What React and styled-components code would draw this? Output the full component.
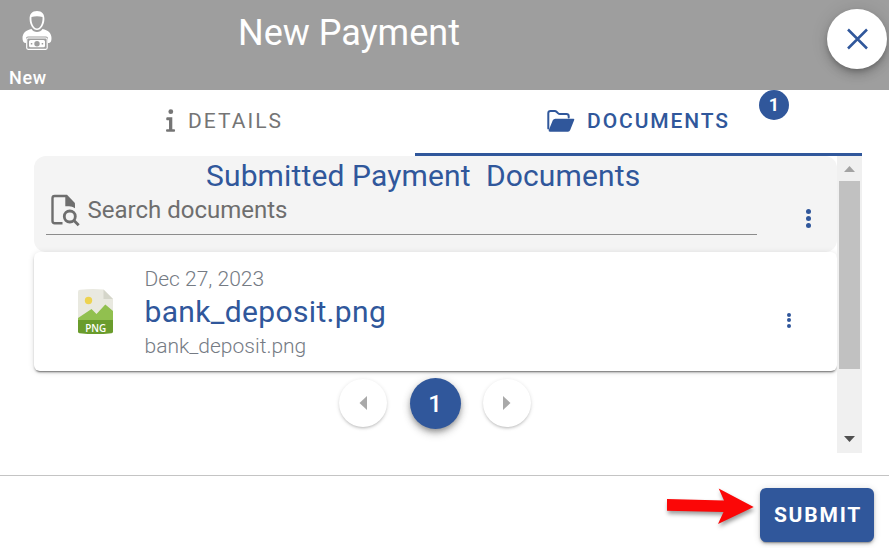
import React from "react";
import styled, { createGlobalStyle } from "styled-components";

const BLUE = "#30579b";

const GlobalStyle = createGlobalStyle`
  *, *::before, *::after { box-sizing: border-box; }
  body { margin: 0; background: #fff; font-family: Roboto, "Open Sans", sans-serif; overflow: hidden; }
  button { font: inherit; border: 0; padding: 0; cursor: pointer; }
  svg { display: block; flex: none; }
`;

const Dialog = styled.div`
  display: flex;
  flex-direction: column;
  width: 889px;
  height: 548px;
  overflow: hidden;
`;

const Header = styled.header`
  display: flex;
  height: 90px;
  flex: none;
  background: #9e9e9e;
  color: #fff;
`;

const HeaderStatus = styled.div`
  width: 238px;
  padding: 11px 0 0 9px;
  font-size: 18px;
  font-weight: 500;
  line-height: 21px;
  letter-spacing: 0.7px;
  svg { margin: 0 0 17px 13px; }
`;

const Title = styled.h1`
  flex: 1;
  margin: 11px 0 0;
  font-size: 36px;
  font-weight: 400;
  line-height: 44px;
  letter-spacing: 0;
  white-space: nowrap;
`;

const CloseButton = styled.button`
  display: grid;
  place-items: center;
  width: 60px;
  height: 60px;
  margin: 9px 2px 0 0;
  border-radius: 50%;
  background: #fff;
  box-shadow: 0 3px 5px -1px rgba(0,0,0,.2), 0 6px 10px rgba(0,0,0,.14), 0 1px 18px rgba(0,0,0,.12);
`;

const Tabs = styled.nav`
  display: flex;
  flex: none;
  height: 66px;
  padding: 0 27px 0 34px;
`;

const Tab = styled.button`
  position: relative;
  display: flex;
  align-items: center;
  justify-content: center;
  width: ${(p) => p.$width}px;
  padding-bottom: ${(p) => (p.$active ? 2 : 5)}px;
  background: none;
  border-bottom: ${(p) => (p.$active ? `3px solid ${BLUE}` : "0")};
  && { font-size: 21px; }
  color: ${(p) => (p.$active ? BLUE : "#757575")};
  font-weight: ${(p) => (p.$active ? 500 : 400)};
  letter-spacing: ${(p) => (p.$active ? 1.9 : 2)}px;
  gap: 12px;
`;

const Badge = styled.span`
  position: absolute;
  top: 0;
  left: 344px;
  width: 30px;
  height: 30px;
  border-radius: 50%;
  background: ${BLUE};
  color: #fff;
  font-size: 18px;
  font-weight: 700;
  line-height: 30px;
  letter-spacing: 0;
  text-align: center;
`;

const ScrollPane = styled.main`
  display: flex;
  flex: none;
  height: 297px;
  margin: 0 27px 0 34px;
`;

const PaneContent = styled.div`
  width: 803px;
`;

const SearchCard = styled.section`
  height: 96px;
  padding: 0 12px;
  border-radius: 12px;
  background: #f4f4f4;
`;

const Heading = styled.h2`
  margin: 0;
  padding-left: 160px;
  color: ${BLUE};
  font-size: 30px;
  font-weight: 400;
  line-height: 39px;
  letter-spacing: 0.14px;
  white-space: pre;
`;

const SearchRow = styled.div`
  display: flex;
  justify-content: space-between;
`;

const SearchField = styled.div`
  display: flex;
  align-items: center;
  width: 711px;
  height: 40px;
  border-bottom: 1px solid #8c8c8c;
  color: #6e6e6e;
  font-size: 24px;
  line-height: 30px;
  span { margin: -10px 0 0 7.5px; }
  svg { margin: -9px 0 0 4px; }
`;

const MenuButton = styled.button`
  display: flex;
  flex-direction: column;
  align-items: center;
  gap: ${(p) => p.$gap}px;
  width: 20px;
  margin: ${(p) => p.$margin};
  background: none;
  i { width: ${(p) => p.$dot}px; height: ${(p) => p.$dot}px; border-radius: 50%; background: ${BLUE}; }
`;

const FileCard = styled.article`
  display: flex;
  align-items: flex-start;
  height: 119px;
  border-radius: 6px;
  background: #fff;
  box-shadow: 0 3px 1px -2px rgba(0,0,0,.3), 0 2px 2px rgba(0,0,0,.2), 0 1px 6px rgba(0,0,0,.12);
`;

const FileIcon = styled.svg`
  margin: 37px 30.5px 0 44px;
`;

const FileText = styled.div`
  flex: 1;
  padding-top: 13px;
`;

const FileMeta = styled.div`
  color: #757b84;
  font-size: 21px;
  font-weight: 300;
  line-height: 28px;
`;

const FileName = styled.div`
  color: ${BLUE};
  font-size: 30px;
  line-height: 38px;
  letter-spacing: 0.35px;
  margin-bottom: 1px;
`;

const Pagination = styled.div`
  display: flex;
  align-items: center;
  justify-content: center;
  gap: 22.5px;
  height: 51px;
  margin-top: 7px;
  padding-right: 1px;
`;

const PageButton = styled.button`
  display: grid;
  place-items: center;
  width: ${(p) => (p.$active ? 51 : 48)}px;
  height: ${(p) => (p.$active ? 51 : 48)}px;
  margin-top: ${(p) => (p.$active ? 0 : -1)}px;
  border-radius: 50%;
  background: ${(p) => (p.$active ? BLUE : "#fff")};
  color: #fff;
  && { font-size: 24px; font-weight: 500; }
  padding-top: ${(p) => (p.$active ? 1 : 0)}px;
  box-shadow: ${(p) => (p.$active
    ? "0 3px 5px -1px rgba(0,0,0,.25), 0 5px 8px rgba(0,0,0,.18), 0 1px 10px rgba(0,0,0,.12)"
    : "0 2px 3px -1px rgba(0,0,0,.2), 0 1px 4px rgba(0,0,0,.12)")};
`;

const ScrollTrack = styled.div`
  display: flex;
  flex-direction: column;
  align-items: center;
  width: 25px;
  background: #f0f0f0;
`;

const TrackTop = styled.div`
  height: 16px;
  padding-top: 10px;
`;

const ScrollThumb = styled.div`
  width: 21px;
  height: 188px;
  margin: 9px 0 67px;
  background: #c1c1c1;
`;

const Footer = styled.footer`
  display: flex;
  justify-content: flex-end;
  height: 73px;
  margin-top: 22px;
  padding: 12px 15px 0 0;
  border-top: 1px solid #c4c4c4;
`;

const Arrow = styled.svg`
  margin-right: 2px;
  filter: drop-shadow(1px 3px 2px rgba(0,0,0,.4));
  overflow: visible;
`;

const SubmitButton = styled.button`
  width: 114px;
  height: 54px;
  padding: 0 0 1px 2px;
  border-radius: 6px;
  background: ${BLUE};
  color: #fff;
  && { font-size: 21px; font-weight: 700; letter-spacing: 1.8px; }
  box-shadow: 0 3px 1px -2px rgba(0,0,0,.2), 0 2px 3px rgba(0,0,0,.2), 0 1px 7px rgba(0,0,0,.15);
`;

const Dots = ({ label, ...rest }) => (
  <MenuButton aria-label={label} {...rest}><i /><i /><i /></MenuButton>
);

const PayerIcon = () => (
  <svg width="30" height="39" viewBox="0 0 30 39" fill="#fff">
    <path fillRule="evenodd" d="M15 0c5 0 7.500 3 7.400 8-.1 6-3.500 11-7.400 11S7.700 14 7.600 8C7.500 3 10 0 15 0Zm-5.500 6c-.6 5.500 2 11.500 5.500 11.500S21 11.500 20.500 6c-3-.9-8-.9-11 0Z" />
    <path d="M9.500 18c2 4 9 4 11 0 5.500 1 9 4 9 9 0 3-.6 5-3.500 5v-4.500q0-2-2-2H6q-2 0-2 2V32c-2.500 0-3.500-2-3.500-5 0-5 3.500-8 9-9Z" />
    <rect x="4.700" y="27" width="20.500" height="11.300" rx="1.500" fill="none" stroke="#fff" strokeWidth="1.200" />
    <path fillRule="evenodd" d="M8.500 29h13q1.500 0 1.500 1.500v4.300q0 1.500-1.500 1.500h-13Q7 36.300 7 34.800v-4.300Q7 29 8.500 29Zm6.500 1a2.700 2.700 0 1 0 0 5.400 2.700 2.700 0 0 0 0-5.400Zm-6.200 1.900v1.500h1.500v-1.500Zm10.900 0v1.500h1.500v-1.500Z" />
  </svg>
);

const InfoIcon = () => (
  <svg width="10" height="24" viewBox="0 0 10 24" fill="#757575">
    <circle cx="4.800" cy="2.700" r="2.400" />
    <path d="M1 8.200h5.300v12h1.800q1 0 1 1.300t-1 1.300H1q-1 0-1-1.300t1-1.300h2v-9H1q-.8 0-.8-1.500T1 8.200Z" />
  </svg>
);

const FolderIcon = () => (
  <svg width="28" height="24" viewBox="0 0 28 24" fill={BLUE}>
    <path d="M1.300 19.500V4.300q0-2.300 2.300-2.300h4.200q1 0 1.700.7l1.700 1.700q.7.700 1.700.7h6.500q2.300 0 2.300 2.300V8.500" fill="none" stroke={BLUE} strokeWidth="2" strokeLinecap="round" />
    <path d="M8.400 9.700h18q1.300 0 .8 1.300l-4 10q-.6 1.700-2.200 1.700H3q-1.800 0-1.300-1.400L5.800 11.300q.7-1.600 2.600-1.600Z" />
  </svg>
);

const SearchFileIcon = () => (
  <svg width="30" height="33" viewBox="0 0 30 33" fill="#6e6e6e">
    <path d="M12.500 29.200H4.700q-2.200 0-2.200-2.200V4.200Q2.500 2 4.700 2h11.800l7.200 7.500V13" fill="none" stroke="#6e6e6e" strokeWidth="2.400" />
    <path d="M15.300 1.500 25 11v3.300q-2.500-2-6-2h-3.700Z" />
    <circle cx="19.800" cy="22.500" r="5.500" fill="none" stroke="#6e6e6e" strokeWidth="2.800" />
    <path d="m23.700 26.300 5 5" stroke="#6e6e6e" strokeWidth="2.800" />
  </svg>
);

const PngIcon = () => (
  <FileIcon width="36" height="46" viewBox="0 0 36 46">
    <path d="M0 3Q0 .8 2 .7 15-.4 25.500.6L35 10v21.500H0Z" fill="#e9e9e0" />
    <path d="m25.500.6 9.500 9.400h-9.500Z" fill="#d5d6ca" />
    <circle cx="10.500" cy="11.500" r="3.700" fill="#edd351" />
    <path d="m0 29 13.500-9 5 5L27.300 15.500 35 22v9.500H0Z" fill="#91c04f" />
    <path d="M0 31h35v11.500q0 1.500-1.500 1.700-16 1.800-32 0Q0 44 0 42.500Z" fill="#6a9c2c" />
    <text x="17.700" y="42.500" textAnchor="middle" textLength="21" lengthAdjust="spacingAndGlyphs" fontFamily="Open Sans" fontSize="11.500" fontWeight="600" fill="#fff">PNG</text>
  </FileIcon>
);

const Triangle = ({ points, fill, width = 11, height = 7 }) => (
  <svg width={width} height={height}><polygon points={points} fill={fill} /></svg>
);

export default function App() {
  return (
    <>
      <GlobalStyle />
      <Dialog>
        <Header>
          <HeaderStatus><PayerIcon />New</HeaderStatus>
          <Title>New Payment</Title>
          <CloseButton aria-label="Close">
            <svg width="22" height="22"><path d="m2 1.500 19 19M21 1.500l-19 19" stroke={BLUE} strokeWidth="2.500" /></svg>
          </CloseButton>
        </Header>
        <Tabs>
          <Tab $width={381}><InfoIcon />DETAILS</Tab>
          <Tab $width={447} $active><FolderIcon />DOCUMENTS<Badge>1</Badge></Tab>
        </Tabs>
        <ScrollPane>
          <PaneContent>
            <SearchCard>
              <Heading>{"Submitted Payment  Documents"}</Heading>
              <SearchRow>
                <SearchField><SearchFileIcon /><span>Search documents</span></SearchField>
                <Dots label="List options" $dot={5} $gap={2.2} $margin="14px 7px 0 0" />
              </SearchRow>
            </SearchCard>
            <FileCard>
              <PngIcon />
              <FileText>
                <FileMeta>Dec 27, 2023</FileMeta>
                <FileName>bank_deposit.png</FileName>
                <FileMeta>bank_deposit.png</FileMeta>
              </FileText>
              <Dots label="File options" $dot={4} $gap={1.8} $margin="60.500px 38.500px 0 0" />
            </FileCard>
            <Pagination>
              <PageButton aria-label="Previous"><Triangle width={8} height={14} points="8,0 8,14 0.500,7" fill="#a9a9a9" /></PageButton>
              <PageButton $active>1</PageButton>
              <PageButton aria-label="Next"><Triangle width={8} height={14} points="0,0 0,14 7.500,7" fill="#a9a9a9" /></PageButton>
            </Pagination>
          </PaneContent>
          <ScrollTrack>
            <TrackTop><Triangle points="0,6 11,6 5.500,0" fill="#a3a3a3" /></TrackTop>
            <ScrollThumb />
            <Triangle points="0,0 11,0 5.500,6" fill="#505050" />
          </ScrollTrack>
        </ScrollPane>
        <Footer>
          <Arrow width="91" height="38" viewBox="667 488 91 38">
            <polygon points="667,499 724,500.500 718.700,488.500 753.700,507 718,524 723.500,512 667,510.700" fill="#fb0707" />
          </Arrow>
          <SubmitButton>SUBMIT</SubmitButton>
        </Footer>
      </Dialog>
    </>
  );
}
